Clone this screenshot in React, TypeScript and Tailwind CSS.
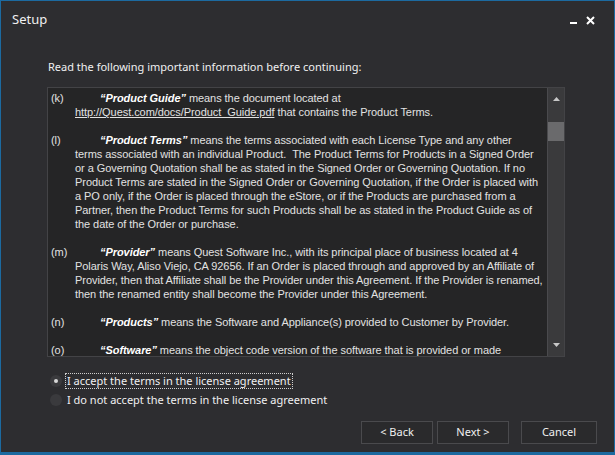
import React from "react";

const ui = { fontFamily: '"Noto Sans", "Open Sans", sans-serif' };
const body = { fontFamily: '"Liberation Sans", Arial, sans-serif' };

type Clause = { label: string; term: string; lines: React.ReactNode[] };

const clauses: Clause[] = [
  {
    label: "(k)",
    term: "“Product Guide”",
    lines: [
      " means the document located at",
      <>
        <span className="underline">http://Quest.com/docs/Product_Guide.pdf</span> that contains the Product Terms.
      </>,
    ],
  },
  {
    label: "(l)",
    term: "“Product Terms”",
    lines: [
      " means the terms associated with each License Type and any other",
      "terms associated with an individual Product.  The Product Terms for Products in a Signed Order",
      "or a Governing Quotation shall be as stated in the Signed Order or Governing Quotation. If no",
      "Product Terms are stated in the Signed Order or Governing Quotation, if the Order is placed with",
      "a PO only, if the Order is placed through the eStore, or if the Products are purchased from a",
      "Partner, then the Product Terms for such Products shall be as stated in the Product Guide as of",
      "the date of the Order or purchase.",
    ],
  },
  {
    label: "(m)",
    term: "“Provider”",
    lines: [
      " means Quest Software Inc., with its principal place of business located at 4",
      "Polaris Way, Aliso Viejo, CA 92656. If an Order is placed through and approved by an Affiliate of",
      "Provider, then that Affiliate shall be the Provider under this Agreement. If the Provider is renamed,",
      "then the renamed entity shall become the Provider under this Agreement.",
    ],
  },
  {
    label: "(n)",
    term: "“Products”",
    lines: [" means the Software and Appliance(s) provided to Customer by Provider."],
  },
  {
    label: "(o)",
    term: "“Software”",
    lines: [" means the object code version of the software that is provided or made"],
  },
];

const ClauseBlock = ({ c }: { c: Clause }) => (
  <div className="flex mb-[14px]">
    <div className="w-[24px] shrink-0">{c.label}</div>
    <div>
      {c.lines.map((l, i) => (
        <div key={i} className="whitespace-pre h-[14px]">
          {i === 0 && (
            <>
              <span className="inline-block w-[25px]" />
              <span className="font-bold italic text-white">{c.term}</span>
            </>
          )}
          {l}
        </div>
      ))}
    </div>
  </div>
);

const Radio = ({ checked, label, focus }: { checked?: boolean; label: string; focus?: boolean }) => (
  <div className="flex items-center h-[19px]">
    <div className="w-[12px] h-[12px] rounded-full bg-[#3a3a3d] flex items-center justify-center mr-[4px]">
      {checked && <div className="w-[4px] h-[4px] rounded-full bg-[#d8d8d8]" />}
    </div>
    <span className={`px-[1px] leading-[14px] ${focus ? "outline outline-1 outline-dotted outline-[#cfcfcf]" : ""}`}>
      {label}
    </span>
  </div>
);

const Btn = ({ children, w }: { children: React.ReactNode; w: string }) => (
  <div className={`${w} h-[23px] border border-[#4a4a4d] bg-[#2a2a2c] flex items-center justify-center text-[11px] text-[#f0f0f0]`}>
    {children}
  </div>
);

export default function App() {
  return (
    <div
      className="w-[615px] h-[455px] bg-[#2d2d30] border border-[#1c6aa0] border-b-[3px] flex flex-col text-[#f0f0f0] overflow-hidden"
      style={ui}
    >
      {/* title bar */}
      <div className="h-[38px] flex items-center justify-between pl-[11px] pr-[6px]">
        <span className="text-[13px] text-[#f0f0f0]">Setup</span>
        <div className="flex items-center gap-[9px]">
          <div className="w-[7px] h-[2px] bg-white mt-[6px]" />
          <svg width="9" height="9" viewBox="0 0 9 9">
            <path d="M1 1 L8 8 M8 1 L1 8" stroke="white" strokeWidth="2" />
          </svg>
          <div className="w-[4px]" />
        </div>
      </div>

      <div className="pl-[47px] pr-[50px] mt-[20px] text-[11px] leading-[16px]">
        Read the following important information before continuing:
      </div>

      {/* license box */}
      <div className="ml-[46px] mt-[12px] w-[518px] h-[270px] border border-[#434346] bg-[#252526] flex">
        <div
          className="flex-1 overflow-hidden pl-[3px] pt-[3px] text-[11px] leading-[14px] tracking-[-0.06px] text-[#e2e2e2]"
          style={body}
        >
          {clauses.map((c) => (
            <ClauseBlock key={c.label} c={c} />
          ))}
        </div>
        <div className="w-[17px] bg-[#3a3a3c] border-l border-[#4a4a4d] flex flex-col items-center">
          <svg width="9" height="6" viewBox="0 0 9 6" className="mt-[8px]">
            <path d="M4.5 1 L8 5 L1 5 Z" fill="#c8c8c8" />
          </svg>
          <div className="w-[16px] h-[19px] bg-[#6a6a6c] mt-[20px]" />
          <div className="flex-1" />
          <svg width="9" height="6" viewBox="0 0 9 6" className="mb-[8px]">
            <path d="M1 1 L8 1 L4.5 5 Z" fill="#c8c8c8" />
          </svg>
        </div>
      </div>

      {/* radios */}
      <div className="ml-[49px] mt-[14px] text-[11px] flex flex-col">
        <Radio checked focus label="I accept the terms in the license agreement" />
        <Radio label="I do not accept the terms in the license agreement" />
      </div>

      {/* buttons */}
      <div className="mt-auto mb-[8px] flex justify-end pr-[17px]">
        <Btn w="w-[72px]">&lt; Back</Btn>
        <div className="w-[4px]" />
        <Btn w="w-[72px]">Next &gt;</Btn>
        <div className="w-[12px]" />
        <Btn w="w-[76px]">Cancel</Btn>
      </div>
    </div>
  );
}
